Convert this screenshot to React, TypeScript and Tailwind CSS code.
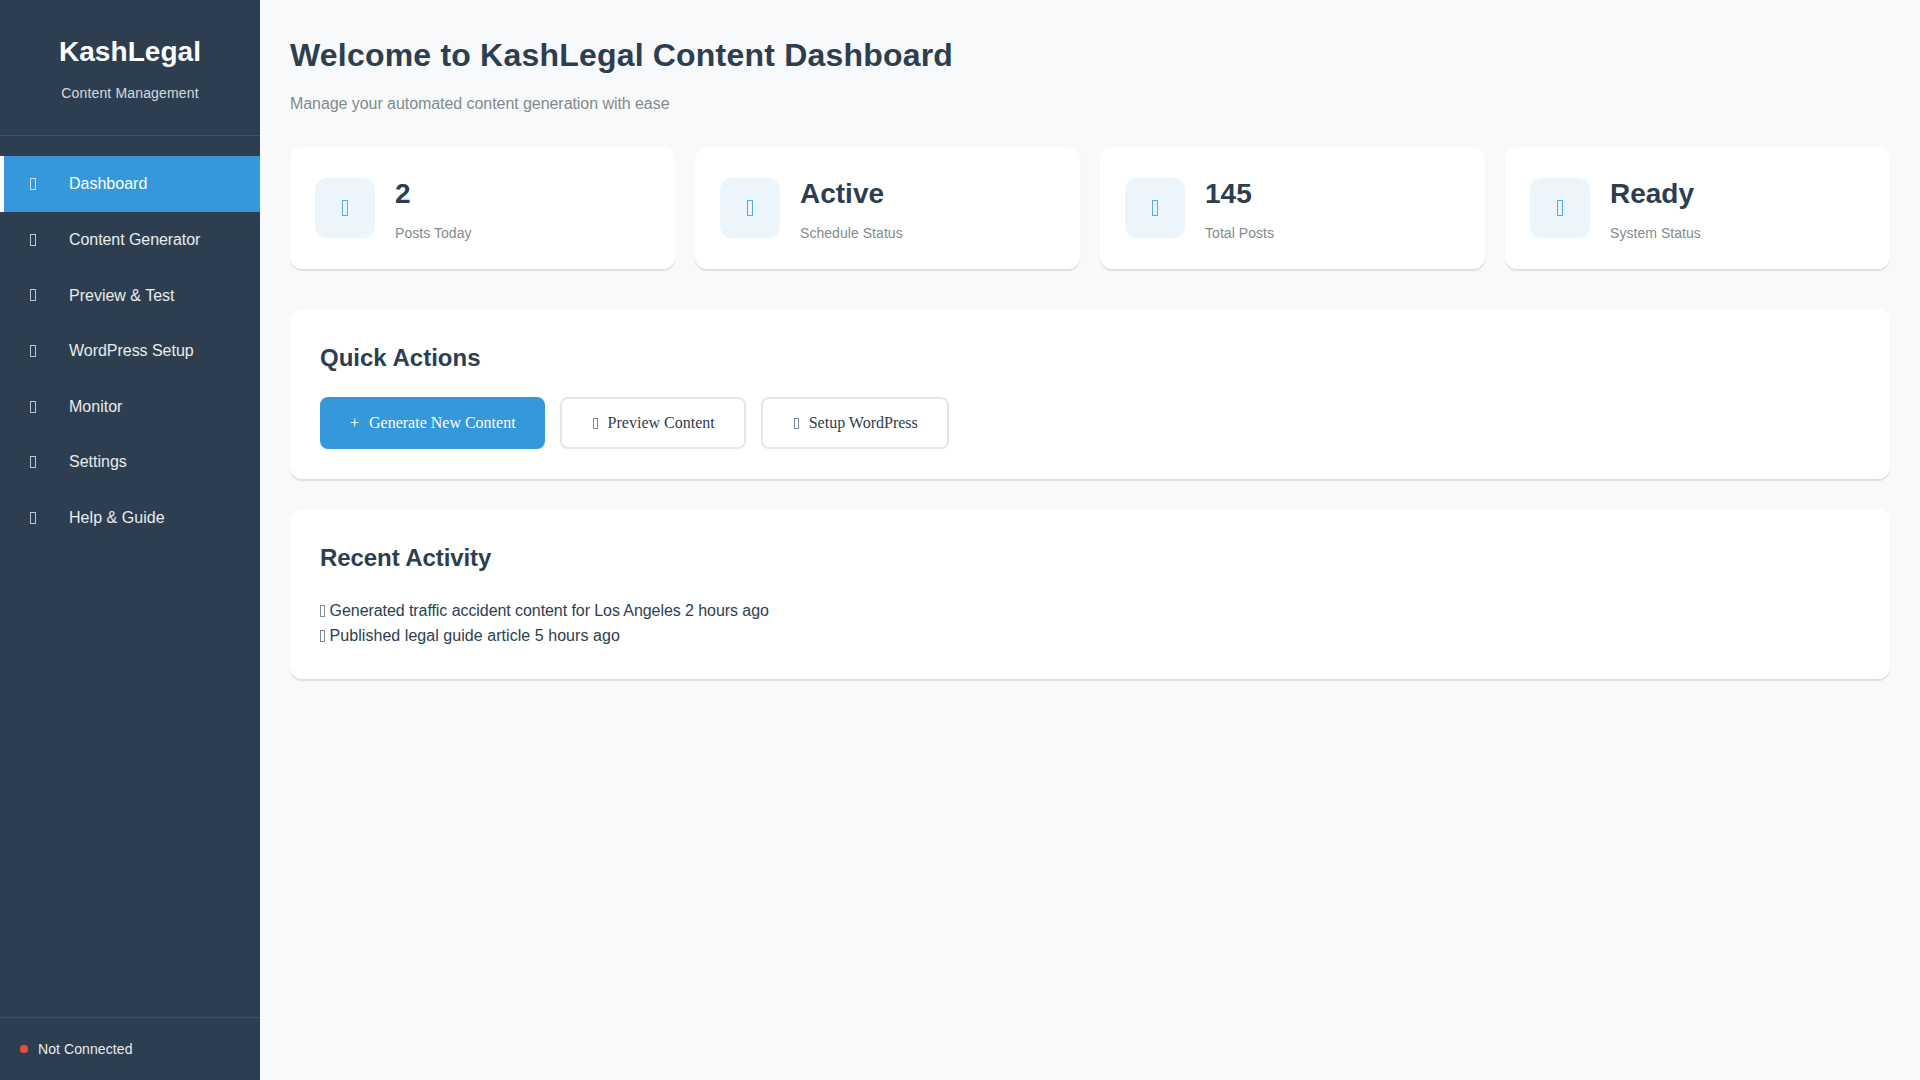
import React from "react";

const navItems = [
  { label: "Dashboard", active: true, track: "" },
  { label: "Content Generator", track: "tracking-[-0.07px]" },
  { label: "Preview & Test", track: "" },
  { label: "WordPress Setup", track: "tracking-[-0.03px]" },
  { label: "Monitor", track: "" },
  { label: "Settings", track: "" },
  { label: "Help & Guide", track: "tracking-[0.04px]" },
];

const stats = [
  { value: "2", label: "Posts Today" },
  { value: "Active", label: "Schedule Status" },
  { value: "145", label: "Total Posts" },
  { value: "Ready", label: "System Status" },
];

// icon font never loaded in the original, so every icon shows as an empty box
function MissingIcon({ className }: { className: string }) {
  return <span className={"inline-block border " + className}></span>;
}

export default function App() {
  return (
    <div className="flex h-screen bg-[#f8f9fa] font-['Liberation_Sans',Arial,sans-serif] text-base leading-[1.6] text-[#2c3e50]">
      {/* Sidebar */}
      <aside className="flex w-[260px] shrink-0 flex-col bg-[#2c3e50] text-white">
        <div className="border-b border-white/10 px-5 pb-[31px] pt-[30px] text-center">
          <h1 className="mb-[7px] text-[28px] font-bold leading-[1.6] tracking-[0.05px]">KashLegal</h1>
          <p className="text-[14px] tracking-[0.15px] opacity-80">Content Management</p>
        </div>

        <nav className="flex-1 pb-5 pt-[20.2px]">
          {navItems.map((item) => (
            <a
              key={item.label}
              className={
                item.active
                  ? "flex items-center border-l-4 border-white bg-[#3498db] px-[25px] py-[15px] text-white"
                  : "flex items-center border-l-4 border-transparent px-[25px] py-[15px] text-white/90"
              }
            >
              <span className="flex w-10 shrink-0 items-center">
                <MissingIcon className="ml-px h-3 w-[6px] border-white/70" />
              </span>
              <span className={item.track}>{item.label}</span>
            </a>
          ))}
        </nav>

        <div className="flex items-center gap-2.5 border-t border-white/10 p-5 text-[14px]">
          <span className="h-2 w-2 rounded-full bg-[#e74c3c]"></span>
          <span className="tracking-[0.09px] opacity-90">Not Connected</span>
        </div>
      </aside>

      {/* Main */}
      <main className="flex-1 p-[30px]">
        <div className="mb-[30px]">
          <h2 className="mb-2.5 text-[32px] font-bold leading-[1.6] tracking-[0.2px]">
            Welcome to KashLegal Content Dashboard
          </h2>
          <p className="tracking-[-0.06px] text-[#7f8c8d]">Manage your automated content generation with ease</p>
        </div>

        <div className="mb-10 grid grid-cols-4 gap-5">
          {stats.map((s) => (
            <div
              key={s.label}
              className="flex items-center gap-5 rounded-xl bg-white p-[25px] shadow-[0_2px_1px_rgba(0,0,0,0.1)]"
            >
              <div className="flex h-[60px] w-[60px] items-center justify-center rounded-xl bg-[#ebf5fb]">
                <MissingIcon className="h-4 w-[6px] border-[#3498db]/80" />
              </div>
              <div>
                <div className="mb-[5px] text-[28px] font-bold leading-[1.6]">{s.value}</div>
                <div className="text-[14px] tracking-[0.05px] text-[#7f8c8d]">{s.label}</div>
              </div>
            </div>
          ))}
        </div>

        <section className="mb-[30px] rounded-xl bg-white p-[30px] shadow-[0_2px_1px_rgba(0,0,0,0.1)]">
          <h3 className="mb-5 text-2xl font-bold leading-[1.6]">Quick Actions</h3>
          <div className="flex gap-[15px] font-['Liberation_Serif',serif] leading-[normal]">
            <button className="flex items-center rounded-lg border-2 border-[#3498db] bg-[#3498db] py-[15px] pl-7 pr-[27px] text-white">
              <span className="mr-2 w-[11px] text-left">+</span>
              <span>Generate New Content</span>
            </button>
            <button className="flex items-center rounded-lg border-2 border-[#e1e8ed] bg-white py-[15px] pl-7 pr-[29px] text-[#2c3e50]">
              <span className="mr-2 flex w-[10px] items-center">
                <MissingIcon className="ml-[3px] h-[11px] w-[5px] border-[#2c3e50]/60" />
              </span>
              <span>Preview Content</span>
            </button>
            <button className="flex items-center rounded-lg border-2 border-[#e1e8ed] bg-white py-[15px] pl-7 pr-[29px] text-[#2c3e50]">
              <span className="mr-2 flex w-[10px] items-center">
                <MissingIcon className="ml-[3px] h-[11px] w-[5px] border-[#2c3e50]/60" />
              </span>
              <span>Setup WordPress</span>
            </button>
          </div>
        </section>

        <section className="rounded-xl bg-white p-[30px] shadow-[0_2px_1px_rgba(0,0,0,0.1)]">
          <h3 className="mb-5 text-2xl font-bold leading-[1.6] tracking-[-0.08px]">Recent Activity</h3>
          <div className="tracking-[-0.07px]">
            <MissingIcon className="mr-[4.6px] h-3 w-[5px] border-[#2c3e50]/60 align-[-1px]" />
            Generated traffic accident content for Los Angeles 2 hours ago
          </div>
          <div className="tracking-[0.05px]">
            <MissingIcon className="mr-[4.6px] h-3 w-[5px] border-[#2c3e50]/60 align-[-1px]" />
            Published legal guide article 5 hours ago
          </div>
        </section>
      </main>
    </div>
  );
}
